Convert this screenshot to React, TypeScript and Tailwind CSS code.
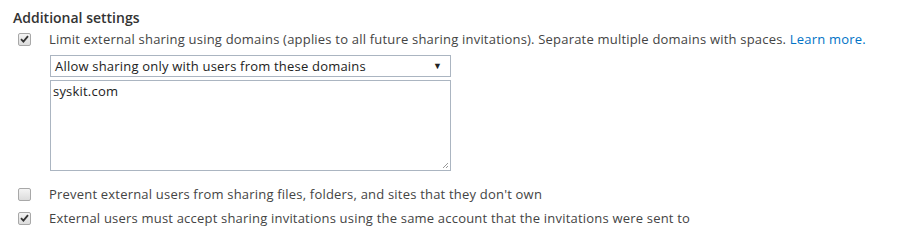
import React from 'react';

const Check = ({ checked }: { checked: boolean }) => (
  <span className="w-[13px] h-[13px] shrink-0 rounded-[2px] border border-[#a8a8a8] bg-gradient-to-b from-[#f4f4f4] to-[#dcdcdc] flex items-center justify-center">
    {checked && (
      <svg width="9" height="8" viewBox="0 0 9 8">
        <path d="M1 4.2 L3.4 6.6 L8 1.2" fill="none" stroke="#333" strokeWidth="1.8" />
      </svg>
    )}
  </span>
);

const Row = ({ checked, children }: { checked: boolean; children: React.ReactNode }) => (
  <div className="flex items-center h-[24px]">
    <div className="w-[49px] pl-[18px] flex items-center">
      <Check checked={checked} />
    </div>
    <div>{children}</div>
  </div>
);

const App: React.FC = () => {
  return (
    <div className="w-[900px] h-[230px] bg-white text-[#444] text-[13px] leading-[18px] tracking-[0.2px] font-['Open_Sans',sans-serif] overflow-hidden">
      <div className="pl-[13px] pt-[9px] font-semibold text-[#333] text-[14px] tracking-normal">Additional settings</div>
      <Row checked>
        Limit external sharing using domains (applies to all future sharing invitations). Separate multiple domains with spaces.{' '}
        <a className="text-[#0072c6]">Learn more.</a>
      </Row>
      <div className="pl-[50px] pt-[4px]">
        <div className="w-[401px] h-[22px] border border-[#abb5c1] flex items-center justify-between pl-[4px] pr-[8px] text-[#222]">
          <span>Allow sharing only with users from these domains</span>
          <span className="text-[9px]">▼</span>
        </div>
        <div className="relative mt-[3px] w-[401px] h-[91px] border border-[#abb5c1] px-[2px] pt-[1px] text-[#222]">
          syskit.com
          <svg className="absolute right-[1px] bottom-[1px]" width="8" height="8" viewBox="0 0 8 8">
            <path d="M7 2 L2 7 M7 5 L5 7" stroke="#999" strokeWidth="1" />
          </svg>
        </div>
      </div>
      <div className="pt-[11px]">
        <Row checked={false}>Prevent external users from sharing files, folders, and sites that they don't own</Row>
        <Row checked>External users must accept sharing invitations using the same account that the invitations were sent to</Row>
      </div>
    </div>
  );
};

export default App;
